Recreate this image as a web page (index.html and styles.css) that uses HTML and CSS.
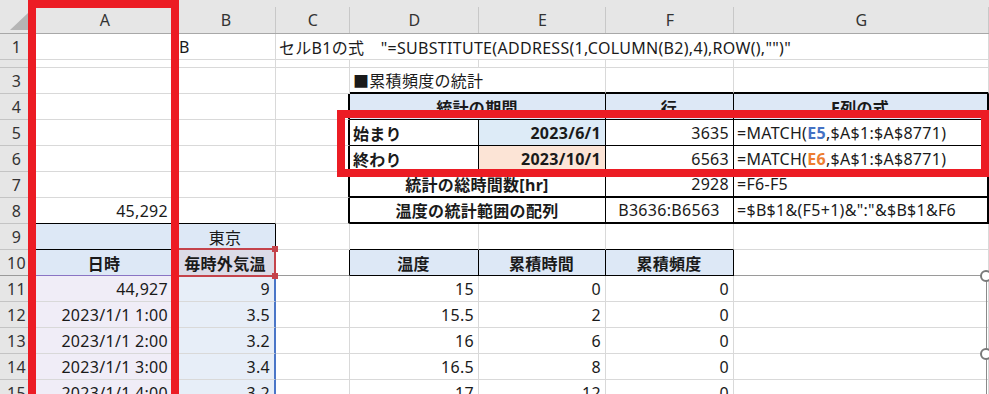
FILE: index.html
```html
<!DOCTYPE html>
<html lang="ja">
<head>
  <meta charset="UTF-8">
  <title>累積頻度の統計</title>
  <link rel="stylesheet" href="styles.css">
</head>
<body>

<div class="sheet">

  <!--列見出し-->
  <div class="corner">
    <svg width="34" height="34" viewBox="0 0 34 34"><polygon points="10,30 28,30 28,13" fill="#b5b5b5"/></svg>
  </div>
  <div class="ch">A</div>
  <div class="ch">B</div>
  <div class="ch">C</div>
  <div class="ch">D</div>
  <div class="ch">E</div>
  <div class="ch">F</div>
  <div class="ch">G</div>

  <!--1行目-->
  <div class="rh">1</div>
  <div class="c"></div>
  <div class="c">B</div>
  <div class="c span5">セルB1の式　"=SUBSTITUTE(ADDRESS(1,COLUMN(B2),4),ROW(),"")"</div>

  <!--2行目（低い行）-->
  <div class="rh"></div>
  <div class="c"></div>
  <div class="c"></div>
  <div class="c"></div>
  <div class="c"></div>
  <div class="c"></div>
  <div class="c"></div>
  <div class="c"></div>

  <!--3行目-->
  <div class="rh">3</div>
  <div class="c"></div>
  <div class="c"></div>
  <div class="c"></div>
  <div class="c span2 t-top">■累積頻度の統計</div>
  <div class="c t-top"></div>
  <div class="c t-top"></div>

  <!--4行目 統計表の見出し-->
  <div class="rh">4</div>
  <div class="c"></div>
  <div class="c"></div>
  <div class="c t-left"></div>
  <div class="c span2 t m b head">統計の期間</div>
  <div class="c t m b head">行</div>
  <div class="c t t-right m b head">E列の式</div>

  <!--5行目-->
  <div class="rh">5</div>
  <div class="c"></div>
  <div class="c"></div>
  <div class="c t-left"></div>
  <div class="c t b">始まり</div>
  <div class="c t r b start">2023/6/1</div>
  <div class="c t r">3635</div>
  <div class="c t t-right">=MATCH(<span class="ref1">E5</span>,$A$1:$A$8771)</div>

  <!--6行目-->
  <div class="rh">6</div>
  <div class="c"></div>
  <div class="c"></div>
  <div class="c t-left"></div>
  <div class="c t b">終わり</div>
  <div class="c t r b end">2023/10/1</div>
  <div class="c t r">6563</div>
  <div class="c t t-right">=MATCH(<span class="ref2">E6</span>,$A$1:$A$8771)</div>

  <!--7行目-->
  <div class="rh">7</div>
  <div class="c"></div>
  <div class="c"></div>
  <div class="c t-left"></div>
  <div class="c span2 t t-bottom m b">統計の総時間数[hr]</div>
  <div class="c t t-bottom r">2928</div>
  <div class="c t t-bottom t-right">=F6-F5</div>

  <!--8行目-->
  <div class="rh">8</div>
  <div class="c r col-a k-bottom">45,292</div>
  <div class="c k-bottom"></div>
  <div class="c t-left"></div>
  <div class="c span2 t t-bottom m b">温度の統計範囲の配列</div>
  <div class="c t t-bottom m">B3636:B6563</div>
  <div class="c t t-bottom t-right">=$B$1&amp;(F5+1)&amp;":"&amp;$B$1&amp;F6</div>

  <!--9行目-->
  <div class="rh">9</div>
  <div class="c head k-bottom"></div>
  <div class="c head k-right m">東京</div>
  <div class="c"></div>
  <div class="c k-bottom"></div>
  <div class="c k-bottom"></div>
  <div class="c k-bottom"></div>
  <div class="c"></div>

  <!--10行目 見出し（ウィンドウ枠の固定）-->
  <div class="rh frz">10</div>
  <div class="c head m b ref-a-top">日時</div>
  <div class="c sel m b">毎時外気温
    <span class="ref-box"></span>
    <span class="knob knob-tl"></span>
    <span class="knob knob-tr"></span>
    <span class="knob knob-br"></span>
  </div>
  <div class="c frz k-right"></div>
  <div class="c head k m b">温度</div>
  <div class="c head k m b">累積時間</div>
  <div class="c head k m b">累積頻度</div>
  <div class="c frz"></div>

  <!--11行目以降 データ-->
  <div class="rh">11</div>
  <div class="c r col-a ref-a">44,927<span class="knob knob-a"></span></div>
  <div class="c r ref-b">9</div>
  <div class="c"></div>
  <div class="c r">15</div>
  <div class="c r">0</div>
  <div class="c r">0</div>
  <div class="c"></div>

  <div class="rh">12</div>
  <div class="c r col-a ref-a">2023/1/1 1:00</div>
  <div class="c r ref-b">3.5</div>
  <div class="c"></div>
  <div class="c r">15.5</div>
  <div class="c r">2</div>
  <div class="c r">0</div>
  <div class="c"></div>

  <div class="rh">13</div>
  <div class="c r col-a ref-a">2023/1/1 2:00</div>
  <div class="c r ref-b">3.2</div>
  <div class="c"></div>
  <div class="c r">16</div>
  <div class="c r">6</div>
  <div class="c r">0</div>
  <div class="c"></div>

  <div class="rh">14</div>
  <div class="c r col-a ref-a">2023/1/1 3:00</div>
  <div class="c r ref-b">3.4</div>
  <div class="c"></div>
  <div class="c r">16.5</div>
  <div class="c r">8</div>
  <div class="c r">0</div>
  <div class="c"></div>

  <div class="rh">15</div>
  <div class="c r col-a ref-a">2023/1/1 4:00</div>
  <div class="c r ref-b">3.2</div>
  <div class="c"></div>
  <div class="c r">17</div>
  <div class="c r">12</div>
  <div class="c r">0</div>
  <div class="c"></div>

  <!--右端の図形（選択中）-->
  <div class="shape">
    <span class="handle"></span>
    <span class="handle handle-mid"></span>
  </div>

  <!--赤枠の注釈-->
  <div class="mark mark-a"></div>
  <div class="mark mark-e"></div>
</div>

</body>
</html>
```

FILE: styles.css
```css
* {
  margin: 0;
  padding: 0;
  box-sizing: border-box;
}

body {
  width: 989px;
  height: 394px;
  overflow: hidden;
  background-color: #fff;
  font-family: "Noto Sans", "Noto Sans CJK JP", sans-serif;
  font-size: 16px;
  letter-spacing: 0.3px;
  color: #1a1a1a;
}

/*シート全体：列幅と行高さ*/
.sheet {
  position: relative;
  display: grid;
  grid-template-columns: 34px 142px 100px 74px 129px 127px 128px 255px;
  grid-template-rows: 34px 26px 8px repeat(13, 26px);
}

/*列見出し*/
.corner,
.ch {
  background: linear-gradient(#c8c8c8, #c8c8c8) right bottom / 1px 26px no-repeat, #e6e6e6;
  border-bottom: 1px solid #a8a8a8;
}

.ch {
  display: flex;
  align-items: center;
  justify-content: center;
  padding-top: 7px;
  color: #333;
}

.corner svg {
  display: block;
}

/*行見出し*/
.rh {
  background-color: #e6e6e6;
  border-right: 1px solid #a8a8a8;
  border-bottom: 1px solid #c4c4c4;
  display: flex;
  align-items: center;
  justify-content: center;
  color: #333;
}

/*セル*/
.c {
  display: flex;
  align-items: center;
  padding: 0 4px 0 3px;
  white-space: nowrap;
  overflow: hidden;
  border-right: 1px solid #d9d9d9;
  border-bottom: 1px solid #d9d9d9;
}

.span2 {
  grid-column: span 2;
}

.span5 {
  grid-column: span 5;
  overflow: visible;
}

.r {
  justify-content: flex-end;
}

.m {
  justify-content: center;
}

.b {
  font-weight: bold;
}

/*A列の数値は少し内側*/
.col-a {
  padding-right: 7px;
}

/*塗りつぶし*/
.head {
  background-color: #dde8f6;
}

.start {
  background-color: #ddebf7;
}

.end {
  background-color: #fce4d6;
}

/*統計表の罫線*/
.t {
  border-right-color: #000;
  border-bottom-color: #000;
}

.t-top {
  border-bottom: 2px solid #000;
}

.t-left {
  border-right: 2px solid #000;
}

.t-right {
  border-right: 2px solid #000;
}

.t-bottom {
  border-bottom: 2px solid #000;
}

/*細い黒罫線*/
.k {
  border-right-color: #000;
  border-bottom-color: #000;
}

.k-bottom {
  border-bottom-color: #000;
}

.k-right {
  border-right-color: #000;
}

/*ウィンドウ枠の固定線*/
.frz {
  border-bottom-color: #9a9a9a;
}

/*数式の参照色*/
.ref1 {
  color: #4472c4;
  font-weight: bold;
}

.ref2 {
  color: #ed7d31;
  font-weight: bold;
}

.ref-a-top {
  border-bottom-color: #8a74c4;
}

.ref-a {
  background-color: #f0edf7;
  position: relative;
  overflow: visible;
}

.ref-b {
  background-color: #e7eef8;
  border-right: 2px solid #4a76c8;
}

.sel {
  background-color: #dcdbe7;
  position: relative;
  overflow: visible;
}

.ref-box {
  position: absolute;
  left: -2px;
  top: -2px;
  right: -1px;
  bottom: -2px;
  border: 2px solid #c4434b;
}

.knob {
  position: absolute;
  width: 6px;
  height: 6px;
  background-color: #c4434b;
}

.knob-tl {
  left: -4px;
  top: -4px;
}

.knob-tr {
  right: -3px;
  top: -4px;
}

.knob-br {
  right: -3px;
  bottom: -4px;
}

.knob-a {
  background-color: #8a74c4;
  right: -2px;
  top: -3px;
}

/*選択中の図形の枠*/
.shape {
  position: absolute;
  left: 986px;
  top: 276px;
  width: 20px;
  height: 160px;
  border-left: 1px solid #8a8a8a;
  border-top: 1px solid #8a8a8a;
}

.handle {
  position: absolute;
  left: -7px;
  top: -7px;
  width: 12px;
  height: 12px;
  border: 2px solid #7a7a7a;
  border-radius: 50%;
  background-color: #fff;
}

.handle-mid {
  top: 71px;
}

/*赤枠*/
.mark {
  position: absolute;
  border: 8px solid #ec1c24;
}

.mark-a {
  left: 28px;
  top: 0;
  width: 151px;
  height: 420px;
}

.mark-e {
  left: 337px;
  top: 110px;
  width: 652px;
  height: 67px;
}
```
